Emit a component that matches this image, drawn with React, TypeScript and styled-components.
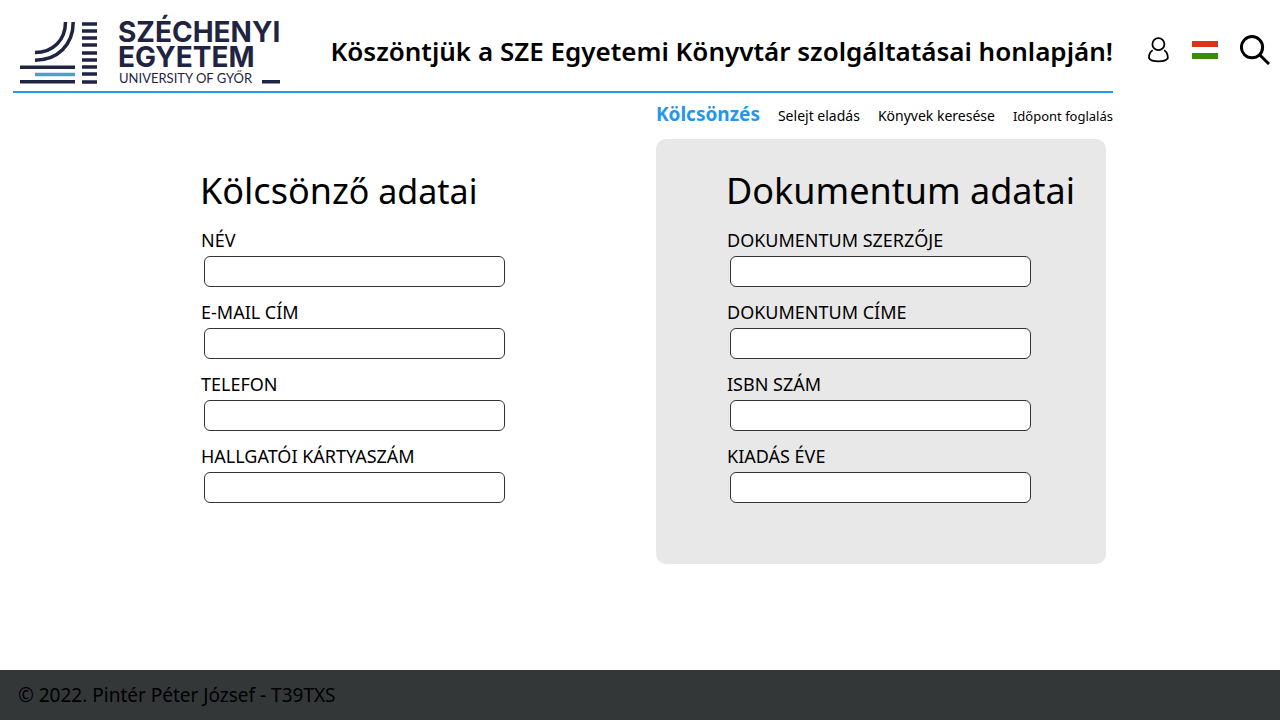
import React from "react";
import styled, { createGlobalStyle } from "styled-components";

const GlobalStyle = createGlobalStyle`
  *, *::before, *::after { box-sizing: border-box; }
  body {
    margin: 0;
    background: #fff;
    color: #000;
    font-family: "Noto Sans", "Open Sans", sans-serif;
  }
`;

const Page = styled.div`
  min-height: 100vh;
  display: flex;
  flex-direction: column;
`;

const Header = styled.header`
  display: flex;
  padding-left: 13px;
`;

const Banner = styled.div`
  flex: 1;
  min-width: 0;
  min-height: 93px;
  padding-top: 9px;
  display: flex;
  align-items: center;
  justify-content: space-between;
  border-bottom: 2px solid #239bea;
`;

const LogoLink = styled.a`
  display: block;
  flex: none;
  margin-left: 5px;
`;

const LogoSvg = styled.svg`
  display: block;
  width: 268px;
  height: 76px;
`;

const Welcome = styled.h1`
  margin: 0;
  padding-top: 2px;
  font-size: 26px;
  line-height: 32px;
  font-weight: 600;
`;

const Tools = styled.div`
  flex: none;
  display: flex;
  align-items: center;
  gap: 22px;
  padding: 6px 10px 0 35px;
`;

const IconButton = styled.button`
  display: flex;
  padding: 0;
  border: 0;
  background: none;
  color: inherit;
  cursor: pointer;
`;

const Nav = styled.nav`
  display: flex;
  align-items: baseline;
  justify-content: flex-end;
  gap: 18px;
  min-height: 46px;
  padding: 9px 167px 0 13px;
`;

const linkSizes = { large: "19px", medium: "14px", small: "13px" };

const NavLink = styled.a<{ $size?: keyof typeof linkSizes; $active?: boolean }>`
  color: ${(p) => (p.$active ? "#2497ea" : "#000")};
  font-size: ${(p) => linkSizes[p.$size ?? "medium"]};
  font-weight: ${(p) => (p.$active ? 700 : 400)};
  line-height: 24px;
  text-decoration: none;
`;

const Content = styled.main`
  flex: 1;
  display: flex;
  align-items: flex-start;
  justify-content: space-between;
  padding: 0 174px 24px 130px;
`;

const Panel = styled.form<{ $shaded?: boolean }>`
  width: 450px;
  padding: 24px 20px 49px 70px;
  border-radius: 10px;
  background: ${(p) => (p.$shaded ? "#e8e8e8" : "transparent")};
`;

const PanelTitle = styled.h2`
  margin: 0 0 8px;
  font-size: 36px;
  line-height: 56px;
  font-weight: 400;
  white-space: nowrap;
`;

const SmallerText = styled.span`
  font-size: 34px;
`;

const Field = styled.div`
  display: flex;
  flex-direction: column;
  margin-bottom: 12px;
`;

const Label = styled.label`
  margin: 0 0 3px 1px;
  font-size: 18px;
  line-height: 26px;
`;

const TextInput = styled.input`
  width: 301px;
  height: 31px;
  margin-left: 4px;
  padding: 0 8px;
  border: 1px solid #333;
  border-radius: 6px;
  background: #fff;
  font: inherit;
  font-size: 16px;
`;

const Footer = styled.footer`
  min-height: 50px;
  display: flex;
  align-items: center;
  padding: 0 18px;
  background: #333738;
  font-size: 19px;
  line-height: 24px;
`;

const NAVY = "#1f2442";
const BAR_ROWS = [24, 31, 38, 45, 53, 60, 67, 74, 82];

function Logo() {
  return (
    <LogoSvg viewBox="18 12 268 76" role="img" aria-label="Széchenyi Egyetem">
      <g fill="none" stroke={NAVY} strokeWidth="3.5">
        <path d="M65.5 22C65.5 40 53 52.6 35 52.6" />
        <path d="M73.2 22C73.2 45 57.5 60.2 35 60.2" />
        {BAR_ROWS.map((y) => (
          <path key={y} d={`M82 ${y}H97`} />
        ))}
        <path d="M20 67.3H75M20 81.8H75M262 81.8H280" />
        <path d="M35 74.6H75" stroke="#43a5c6" />
      </g>
      <g fill={NAVY} fontFamily="Inter, sans-serif">
        <text x="118" y="42" fontSize="28" fontWeight="700">SZÉCHENYI</text>
        <text x="118" y="67" fontSize="28" fontWeight="700">EGYETEM</text>
        <text x="119" y="83" fontSize="13" fontFamily="Lato, sans-serif">UNIVERSITY OF GYŐR</text>
      </g>
    </LogoSvg>
  );
}

function UserIcon() {
  return (
    <svg width="22" height="26" viewBox="0 0 22 26" fill="none" stroke="#000" strokeWidth="1.8">
      <circle cx="10.4" cy="7.2" r="6" />
      <path d="M4.7 13.2C2.2 14.6 0.9 17.5 1 21.2C3.8 25.4 17 25.4 19.8 21.2C19.9 17.5 18.6 14.6 16.1 13.2" />
    </svg>
  );
}

function FlagIcon() {
  return (
    <svg width="26" height="18" viewBox="0 0 26 18">
      <path d="M0 0H26V6H0Z" fill="#d9331a" />
      <path d="M0 6H26V12H0Z" fill="#fff" />
      <path d="M0 12H26V18H0Z" fill="#388e00" />
    </svg>
  );
}

function SearchIcon() {
  return (
    <svg width="30" height="30" viewBox="0 0 30 30" fill="none" stroke="#000" strokeWidth="3">
      <circle cx="12" cy="12.2" r="10.6" />
      <path d="M19.6 19.8L29 29" />
    </svg>
  );
}

type FieldInfo = { id: string; label: string; type?: string };

const borrowerFields: FieldInfo[] = [
  { id: "name", label: "NÉV" },
  { id: "email", label: "E-MAIL CÍM", type: "email" },
  { id: "phone", label: "TELEFON", type: "tel" },
  { id: "card", label: "HALLGATÓI KÁRTYASZÁM" },
];

const documentFields: FieldInfo[] = [
  { id: "author", label: "DOKUMENTUM SZERZŐJE" },
  { id: "title", label: "DOKUMENTUM CÍME" },
  { id: "isbn", label: "ISBN SZÁM" },
  { id: "year", label: "KIADÁS ÉVE" },
];

function Fields({ items }: { items: FieldInfo[] }) {
  return (
    <>
      {items.map((f) => (
        <Field key={f.id}>
          <Label htmlFor={f.id}>{f.label}</Label>
          <TextInput id={f.id} type={f.type ?? "text"} />
        </Field>
      ))}
    </>
  );
}

export default function App() {
  return (
    <Page>
      <GlobalStyle />
      <Header>
        <Banner>
          <LogoLink href="#">
            <Logo />
          </LogoLink>
          <Welcome>Köszöntjük a SZE Egyetemi Könyvtár szolgáltatásai honlapján!</Welcome>
        </Banner>
        <Tools>
          <IconButton type="button" aria-label="Profil">
            <UserIcon />
          </IconButton>
          <IconButton type="button" aria-label="Magyar">
            <FlagIcon />
          </IconButton>
          <IconButton type="button" aria-label="Keresés">
            <SearchIcon />
          </IconButton>
        </Tools>
      </Header>
      <Nav>
        <NavLink href="#" $size="large" $active>Kölcsönzés</NavLink>
        <NavLink href="#">Selejt eladás</NavLink>
        <NavLink href="#">Könyvek keresése</NavLink>
        <NavLink href="#" $size="small">Időpont foglalás</NavLink>
      </Nav>
      <Content>
        <Panel>
          <PanelTitle>
            Kölcsönz<SmallerText>ő adatai</SmallerText>
          </PanelTitle>
          <Fields items={borrowerFields} />
        </Panel>
        <Panel $shaded>
          <PanelTitle>Dokumentum adatai</PanelTitle>
          <Fields items={documentFields} />
        </Panel>
      </Content>
      <Footer>© 2022. Pintér Péter József - T39TXS</Footer>
    </Page>
  );
}
